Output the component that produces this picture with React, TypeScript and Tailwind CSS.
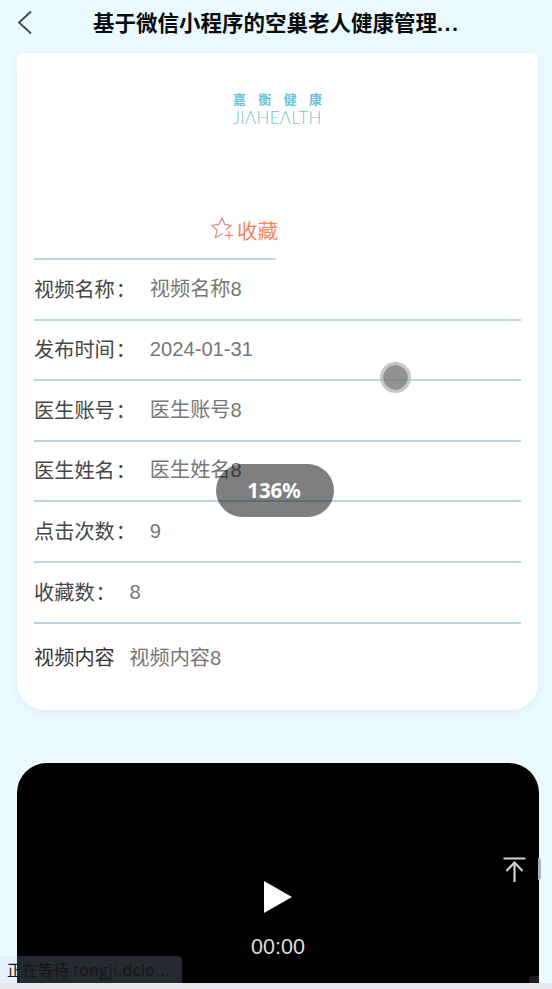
type Row = { label: string; value: string };

const rows: Row[] = [
  { label: "视频名称", value: "视频名称8" },
  { label: "发布时间", value: "2024-01-31" },
  { label: "医生账号", value: "医生账号8" },
  { label: "医生姓名", value: "医生姓名8" },
  { label: "点击次数", value: "9" },
  { label: "收藏数", value: "8" },
];

function Header() {
  return (
    <header className="flex h-[53px] shrink-0 items-start pl-[17px] pt-[8px]">
      <svg className="mt-[2px] h-6 w-4 shrink-0" viewBox="0 0 16 24" fill="none" stroke="#3f4647" strokeWidth="1.8">
        <path d="M14 1.5 2 12.5l12 11" />
      </svg>
      <h1 className="ml-[60px] whitespace-nowrap text-[21.5px] font-bold leading-8 text-[#080c0d]">
        基于微信小程序的空巢老人健康管理<span className="tracking-[1.5px]">...</span>
      </h1>
    </header>
  );
}

function Logo() {
  return (
    <div className="flex h-[156px] flex-col items-start pl-[216px] pt-[40px]">
      <div className="flex w-[89px] justify-between text-[13px] font-bold leading-[14px] text-[#64c4dc]">
        <span>嘉</span>
        <span>衡</span>
        <span>健</span>
        <span>康</span>
      </div>
      <div className="mt-[2px] whitespace-nowrap font-['Lato'] text-[17px] font-light leading-[18px] tracking-[0.3px] text-[#7dbfc5]">
        JIΛHEΛLTH
      </div>
    </div>
  );
}

function Favorite() {
  return (
    <div className="ml-[17px] flex h-[51px] w-[242px] items-start justify-end border-b-2 border-[#bdd8e4] pt-[10px] text-[#f4875f]">
      <svg className="mr-[2px] mt-[-3px] h-[26px] w-[26px]" viewBox="0 0 24 24" fill="none" stroke="#e0877f" strokeWidth="1.1">
        <path d="M15.8 12.7 20.5 8.6 14.6 7.7 12 2 9.2 7.7 2.5 8.6 7.4 13 6 20l6.5-3.6M18.5 14v7.5M14.8 17.8h7.4" />
      </svg>
      <span className="mr-[-2px] text-[20.5px] leading-[26px]">收藏</span>
    </div>
  );
}

function InfoRow({ label, value }: Row) {
  return (
    <div className="mx-[17px] flex h-[60.6px] items-center border-b-2 border-[#bcd6e2] pb-[1px]">
      <span className="pt-[2px] text-[#464646]">{label}</span>
      <span className="ml-px w-[34px] pt-[2px] text-[#464646]">：</span>
      <span className="text-[#777777]">{value}</span>
    </div>
  );
}

function VideoPlayer() {
  return (
    <section className="ml-[17px] mr-[13px] mt-[53px] flex h-[220px] flex-col items-center rounded-t-[30px] bg-black pt-[117px]">
      <svg className="h-[34px] w-[30px]" viewBox="0 0 30 34" fill="#ffffff">
        <path d="M1 1v32l28-16Z" />
      </svg>
      <span className="mt-[21px] text-[21.5px] leading-6 text-[#dddddd]">00:00</span>
    </section>
  );
}

export default function App() {
  return (
    <main className="relative flex h-[989px] w-[552px] flex-col overflow-hidden bg-[#eafaff] font-['Liberation_Sans','Noto_Sans_CJK_SC',sans-serif] text-[20.2px]">
      <Header />
      <section className="ml-[17px] mr-[14px] h-[657px] shrink-0 rounded-b-[27px] rounded-t-[6px] bg-white shadow-[0_3px_8px_#dcf0f9]">
        <Logo />
        <Favorite />
        {rows.map((row) => (
          <InfoRow key={row.label} {...row} />
        ))}
        <div className="mx-[17px] flex h-[70px] items-center">
          <span className="mr-[14.5px] text-[#383838]">视频内容</span>
          <span className="text-[#777777]">视频内容8</span>
        </div>
      </section>
      <VideoPlayer />
      <div className="h-[6px] shrink-0 bg-[#e7e8eb]" />

      <div className="absolute left-[380px] top-[362px] size-[31px] rounded-full border-[3px] border-[#b9b9b9]/80 bg-[#777777]/80 bg-clip-padding" />
      <div className="absolute left-[216px] top-[464px] flex h-[53px] w-[118px] items-center justify-center rounded-full bg-black/50 pr-[2px] font-['Noto_Sans'] text-[20.5px] font-bold text-white">
        136%
      </div>
      <div className="absolute left-[538px] top-[858px] h-[22px] w-[3px] rounded-r-full bg-[#a7b2b5]" />
      <svg className="absolute left-[503px] top-[856px] h-[28px] w-[23px]" viewBox="0 0 23 28" fill="none" stroke="#d0d0d0" strokeWidth="2.2">
        <path d="M.5 2.5h22M11.5 26V6M3.5 15l8-8.5 8 8.5" />
      </svg>
      <div className="absolute left-[529px] top-[976px] h-[7px] w-[10px] rounded-tl bg-[#1c1c1c]" />
      <div className="absolute left-0 top-[956px] flex h-[27px] w-[182px] items-center rounded-tr bg-[#c5cdf0]/20 pl-[7px] pt-[3px] font-['Open_Sans','Noto_Sans_CJK_SC',sans-serif] text-[15.5px] text-[#14161b]">
        <span className="whitespace-nowrap">
          正在等待 <span className="tracking-[0.7px]">tongji.dclo...</span>
        </span>
      </div>
    </main>
  );
}
